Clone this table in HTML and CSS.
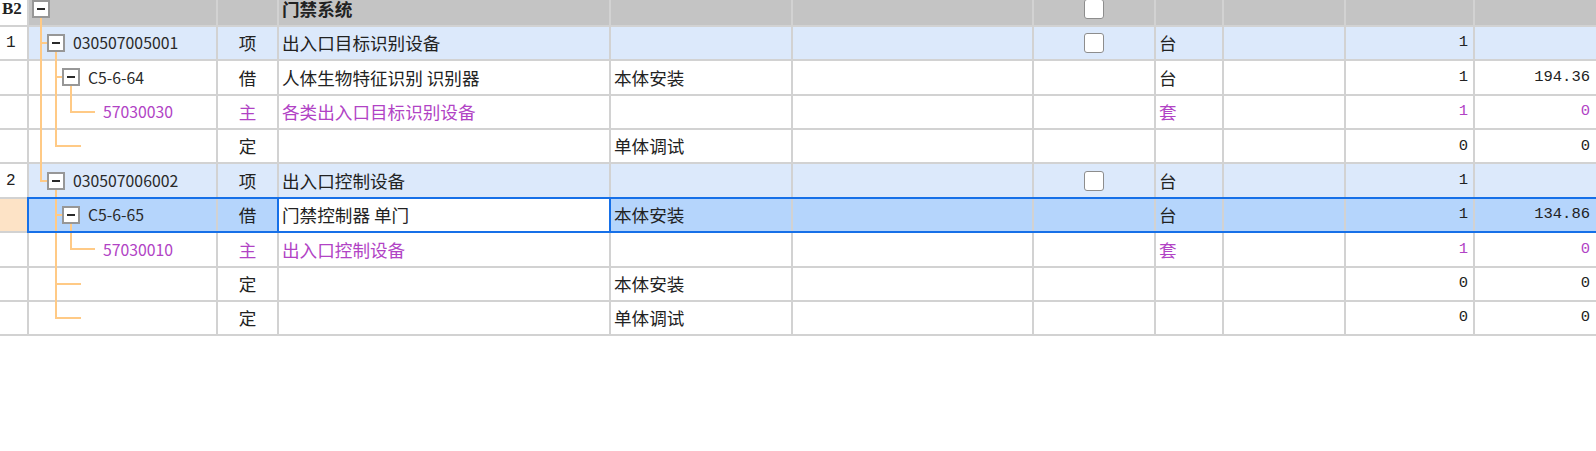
FILE: index.html
```html
<!DOCTYPE html>
<html lang="zh-CN">
<head>
<meta charset="utf-8">
<title>门禁系统</title>
<link rel="stylesheet" href="styles.css">
</head>
<body>
<div class="sheet">
  <div class="row head">
    <div class="c num b2">B2</div>
    <div class="c tree l0"><span class="tg"></span><span class="ln v x1 dn"></span></div>
    <div class="c kind"></div>
    <div class="c name strong">门禁系统</div>
    <div class="c"></div>
    <div class="c"></div>
    <div class="c chk"><span class="cb"></span></div>
    <div class="c"></div>
    <div class="c"></div>
    <div class="c n"></div>
    <div class="c n"></div>
  </div>

  <div class="row item">
    <div class="c num">1</div>
    <div class="c tree l1"><span class="ln v x1 full"></span><span class="ln h h1"></span><span class="tg"></span><span class="code">030507005001</span><span class="ln v x2 dn"></span></div>
    <div class="c kind">项</div>
    <div class="c name">出入口目标识别设备</div>
    <div class="c"></div>
    <div class="c"></div>
    <div class="c chk"><span class="cb"></span></div>
    <div class="c">台</div>
    <div class="c"></div>
    <div class="c n">1</div>
    <div class="c n"></div>
  </div>

  <div class="row">
    <div class="c num"></div>
    <div class="c tree l2"><span class="ln v x1 full"></span><span class="ln v x2 full"></span><span class="ln h h2"></span><span class="tg"></span><span class="code">C5-6-64</span><span class="ln v x3 dn"></span></div>
    <div class="c kind">借</div>
    <div class="c name">人体生物特征识别 识别器</div>
    <div class="c">本体安装</div>
    <div class="c"></div>
    <div class="c chk"></div>
    <div class="c">台</div>
    <div class="c"></div>
    <div class="c n">1</div>
    <div class="c n">194.36</div>
  </div>

  <div class="row main">
    <div class="c num"></div>
    <div class="c tree l3"><span class="ln v x1 full"></span><span class="ln v x2 full"></span><span class="ln v x3 up"></span><span class="ln h h3"></span><span class="code">57030030</span></div>
    <div class="c kind">主</div>
    <div class="c name">各类出入口目标识别设备</div>
    <div class="c"></div>
    <div class="c"></div>
    <div class="c chk"></div>
    <div class="c">套</div>
    <div class="c"></div>
    <div class="c n">1</div>
    <div class="c n">0</div>
  </div>

  <div class="row">
    <div class="c num"></div>
    <div class="c tree"><span class="ln v x1 full"></span><span class="ln v x2 up"></span><span class="ln h h2l"></span></div>
    <div class="c kind">定</div>
    <div class="c name"></div>
    <div class="c">单体调试</div>
    <div class="c"></div>
    <div class="c chk"></div>
    <div class="c"></div>
    <div class="c"></div>
    <div class="c n">0</div>
    <div class="c n">0</div>
  </div>

  <div class="row item">
    <div class="c num">2</div>
    <div class="c tree l1"><span class="ln v x1 up"></span><span class="ln h h1"></span><span class="tg"></span><span class="code">030507006002</span><span class="ln v x2 dn"></span></div>
    <div class="c kind">项</div>
    <div class="c name">出入口控制设备</div>
    <div class="c"></div>
    <div class="c"></div>
    <div class="c chk"><span class="cb"></span></div>
    <div class="c">台</div>
    <div class="c"></div>
    <div class="c n">1</div>
    <div class="c n"></div>
  </div>

  <div class="row sel">
    <div class="c num"></div>
    <div class="c tree l2"><span class="ln v x2 full"></span><span class="ln h h2"></span><span class="tg"></span><span class="code">C5-6-65</span><span class="ln v x3 dn"></span></div>
    <div class="c kind">借</div>
    <div class="c name edit">门禁控制器 单门</div>
    <div class="c">本体安装</div>
    <div class="c"></div>
    <div class="c chk"></div>
    <div class="c">台</div>
    <div class="c"></div>
    <div class="c n">1</div>
    <div class="c n">134.86</div>
  </div>

  <div class="row main">
    <div class="c num"></div>
    <div class="c tree l3"><span class="ln v x2 full"></span><span class="ln v x3 up"></span><span class="ln h h3"></span><span class="code">57030010</span></div>
    <div class="c kind">主</div>
    <div class="c name">出入口控制设备</div>
    <div class="c"></div>
    <div class="c"></div>
    <div class="c chk"></div>
    <div class="c">套</div>
    <div class="c"></div>
    <div class="c n">1</div>
    <div class="c n">0</div>
  </div>

  <div class="row">
    <div class="c num"></div>
    <div class="c tree"><span class="ln v x2 full"></span><span class="ln h h2l"></span></div>
    <div class="c kind">定</div>
    <div class="c name"></div>
    <div class="c">本体安装</div>
    <div class="c"></div>
    <div class="c chk"></div>
    <div class="c"></div>
    <div class="c"></div>
    <div class="c n">0</div>
    <div class="c n">0</div>
  </div>

  <div class="row">
    <div class="c num"></div>
    <div class="c tree"><span class="ln v x2 up"></span><span class="ln h h2l"></span></div>
    <div class="c kind">定</div>
    <div class="c name"></div>
    <div class="c">单体调试</div>
    <div class="c"></div>
    <div class="c chk"></div>
    <div class="c"></div>
    <div class="c"></div>
    <div class="c n">0</div>
    <div class="c n">0</div>
  </div>
</div>
</body>
</html>
```

FILE: styles.css
```css
html, body {
  margin: 0;
  padding: 0;
  background: #ffffff;
  overflow: hidden;
}

.sheet {
  margin-top: -7.5px;
  width: 1598px;
  font-family: "Noto Sans CJK SC", "Liberation Sans", sans-serif;
  font-size: 17.6px;
  color: #222222;
}

.row {
  display: grid;
  grid-template-columns: 29px 189px 61px 332px 182px 241px 122px 68px 122px 129px 123px;
  height: 34.4px;
  position: relative;
}

.c {
  box-sizing: border-box;
  border-right: 2px solid #d2d2d2;
  border-bottom: 2px solid #d2d2d2;
  display: flex;
  align-items: center;
  padding: 0 3px;
  white-space: nowrap;
  line-height: 1;
  min-width: 0;
}

/* row backgrounds */
.head .c { background: #c4c4c4; }
.item .c { background: #dce9fb; }
.sel .c { background: #b5d5fc; }
.row .c.num { background: #ffffff; }
.sel .c.num { background: #fde3c6; }
.sel .c.edit { background: #ffffff; }

.num {
  font-family: "Liberation Mono", monospace;
  font-size: 16px;
  padding-left: 6px;
}

.b2 {
  font-family: "Liberation Serif", serif;
  font-weight: bold;
  font-size: 17px;
  padding-left: 2px;
}

.strong { font-weight: bold; }

.kind { justify-content: center; }

.chk { justify-content: center; }

.cb {
  display: block;
  width: 20px;
  height: 20px;
  box-sizing: border-box;
  border: 1.5px solid #8d8d8d;
  border-radius: 3px;
  background: #ffffff;
}

.n {
  justify-content: flex-end;
  padding-right: 5px;
  font-family: "Liberation Mono", monospace;
  font-size: 15.5px;
}
.row .c.n:last-child { padding-right: 6px; }

.main .c { color: #b143c5; }

/* tree column */
.tree {
  position: relative;
  padding-left: 0;
}
.tree.l0 { padding-left: 3px; }
.tree.l1 { padding-left: 18px; }
.tree.l2 { padding-left: 33px; }
.tree.l3 { padding-left: 74px; }

.tg {
  flex: none;
  position: relative;
  width: 18px;
  height: 18px;
  box-sizing: border-box;
  border: 2px solid #979797;
  background: #ffffff;
  margin-right: 8px;
}
.tg::before {
  content: "";
  position: absolute;
  left: 3px;
  right: 3px;
  top: 6px;
  height: 2px;
  background: #2a2a2a;
}

.code {
  font-size: 15.8px;
  color: #2a2a2a;
}
.main .code { color: #b143c5; }

.ln {
  position: absolute;
  background: #ffca86;
}
.v { width: 2px; }
.x1 { left: 11px; }
.x2 { left: 26px; }
.x3 { left: 41px; }
.full { top: 0; bottom: -2px; }
.up { top: 0; height: calc(50% + 1px); }
.dn { top: calc(50% + 9px); bottom: -2px; }

.h { height: 2px; top: calc(50% - 1px); }
.h1 { left: 11px; width: 7px; }
.h2 { left: 26px; width: 7px; }
.h2l { left: 26px; width: 26px; }
.h3 { left: 41px; width: 25px; }

/* selection */
.sel::after {
  content: "";
  position: absolute;
  left: 27px;
  right: -10px;
  top: -2px;
  bottom: 0;
  border: 2px solid #1670e8;
  pointer-events: none;
}
.edit { position: relative; }
.edit::after {
  content: "";
  position: absolute;
  inset: -2px;
  border: 2px solid #1670e8;
  pointer-events: none;
}
```
